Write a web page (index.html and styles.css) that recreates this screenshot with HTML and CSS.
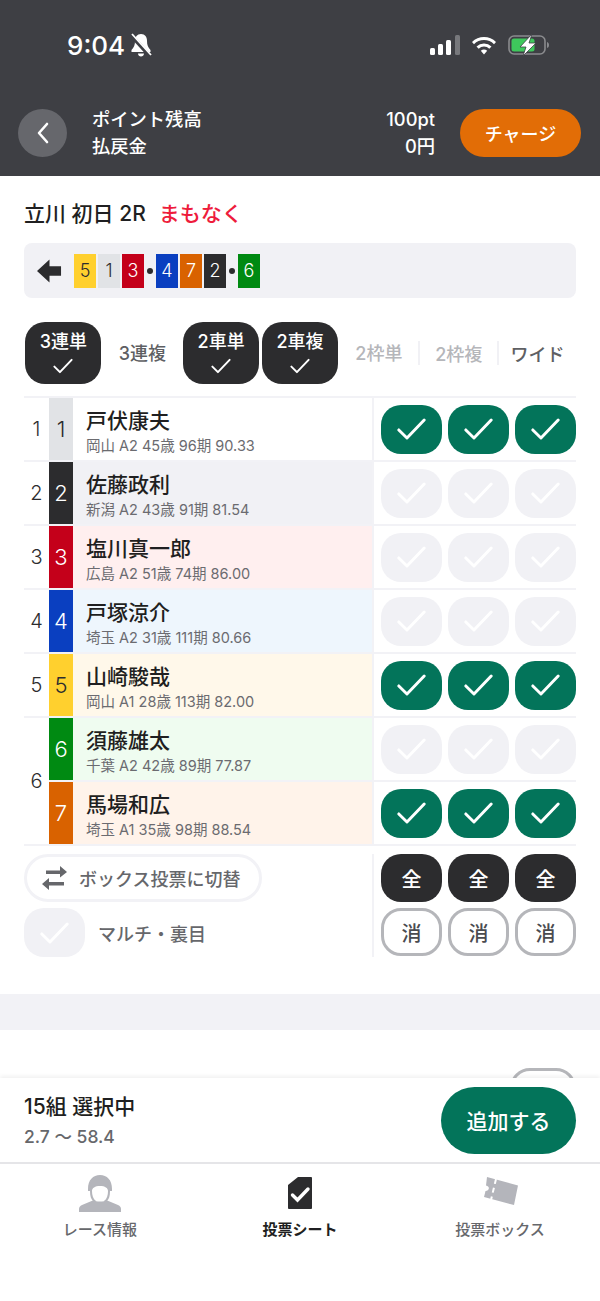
FILE: index.html
```html
<!DOCTYPE html>
<html lang="ja">
<head>
    <meta charset="UTF-8">
    <meta name="viewport" content="width=device-width, initial-scale=1.0">
    <title>投票シート</title>
    <link rel="stylesheet" href="styles.css">
</head>
<body>
<svg class="defs" width="0" height="0">
    <symbol id="check" viewBox="0 0 32 26"><path d="M2 14l9 9L30 3" fill="none" stroke="currentColor" stroke-width="3.2" stroke-linecap="round" stroke-linejoin="round"/></symbol>
</svg>

<div class="app">
    <!-- Header -->
    <header class="top">
        <div class="status">
            <div class="clock">
                <span>9:04</span>
                <svg class="bell" viewBox="0 0 22 24"><path d="M11 1c-4 0-6 3-6 7 0 4-1 6-3.500 9v2h19v-2c-2.500-3-3.500-5-3.500-9 0-4-2-7-6-7zM8 20.500h6c0 2-1.500 3-3 3s-3-1-3-3z" fill="#fff"/><path d="M1 2l19 21" stroke="#3e3f44" stroke-width="4"/><path d="M2 1l19 21" stroke="#fff" stroke-width="1.800"/></svg>
            </div>
            <div class="sys">
                <svg class="signal" viewBox="0 0 30 20"><rect x="0" y="13" width="5" height="7" rx="1.500" fill="#fff"/><rect x="8" y="9" width="5" height="11" rx="1.500" fill="#fff"/><rect x="16" y="5" width="5" height="15" rx="1.500" fill="#fff"/><rect x="25" y="0" width="5" height="20" rx="1.500" fill="#77787c"/></svg>
                <svg class="wifi" viewBox="0 0 26 20"><path d="M1 7a17 17 0 0 1 24 0l-2 2.200a14 14 0 0 0-20 0zM5.500 11.500a11 11 0 0 1 15 0l-2.200 2.300a7.500 7.500 0 0 0-10.600 0zM9.800 15.800a5 5 0 0 1 6.400 0L13 19.500z" fill="#fff"/></svg>
                <svg class="batt" viewBox="0 0 42 22"><rect x="1" y="2" width="36" height="18" rx="5" fill="none" stroke="#8a8b8e" stroke-width="1.600"/><rect x="3.500" y="4.500" width="23" height="13" rx="2.500" fill="#3ec85c"/><path d="M39 8c1.500 .5 2 1.500 2 3s-.5 2.500-2 3z" fill="#8a8b8e"/><path d="M24 0L12 13h6l-3 9L28 9h-7z" fill="#fff" stroke="#3e3f44" stroke-width=".8"/></svg>
            </div>
        </div>
        <div class="bar">
            <button class="back"><svg viewBox="0 0 14 24"><path d="M11 3L3 12l8 9" fill="none" stroke="#fff" stroke-width="2.600" stroke-linecap="round" stroke-linejoin="round"/></svg></button>
            <div class="labels">
                <div>ポイント残高</div>
                <div>払戻金</div>
            </div>
            <div class="values">
                <div>100pt</div>
                <div>0円</div>
            </div>
            <button class="charge">チャージ</button>
        </div>
    </header>

    <main class="content">
        <h1 class="race">立川 初日 2R<span class="soon">まもなく</span></h1>

        <div class="rail">
            <svg class="dir" viewBox="0 0 26 24"><path d="M0 12L13 0v7h12v10H13v7z" fill="#2c2c2e"/></svg>
            <div class="line">
                <span class="chip f5">5</span><span class="chip f1">1</span><span class="chip f3">3</span>
                <span class="sep"></span>
                <span class="chip f4">4</span><span class="chip f7">7</span><span class="chip f2">2</span>
                <span class="sep"></span>
                <span class="chip f6">6</span>
            </div>
        </div>

        <div class="tabs">
            <div class="tab on">3連単<svg><use href="#check"/></svg></div>
            <div class="tab">3連複</div>
            <div class="tab on">2車単<svg><use href="#check"/></svg></div>
            <div class="tab on">2車複<svg><use href="#check"/></svg></div>
            <div class="tab off">2枠単</div>
            <div class="tab off bar-l">2枠複</div>
            <div class="tab bar-l">ワイド</div>
        </div>

        <div class="sheet">
            <div class="num">1</div>
            <div class="frame f1">1</div>
            <div class="info"><div class="name">戸伏康夫</div><div class="sub">岡山 A2 45歳 96期 90.33</div></div>
            <div class="picks"><button class="pick sel"><svg><use href="#check"/></svg></button><button class="pick sel"><svg><use href="#check"/></svg></button><button class="pick sel"><svg><use href="#check"/></svg></button></div>

            <div class="num">2</div>
            <div class="frame f2">2</div>
            <div class="info t2"><div class="name">佐藤政利</div><div class="sub">新潟 A2 43歳 91期 81.54</div></div>
            <div class="picks"><button class="pick"><svg><use href="#check"/></svg></button><button class="pick"><svg><use href="#check"/></svg></button><button class="pick"><svg><use href="#check"/></svg></button></div>

            <div class="num">3</div>
            <div class="frame f3">3</div>
            <div class="info t3"><div class="name">塩川真一郎</div><div class="sub">広島 A2 51歳 74期 86.00</div></div>
            <div class="picks"><button class="pick"><svg><use href="#check"/></svg></button><button class="pick"><svg><use href="#check"/></svg></button><button class="pick"><svg><use href="#check"/></svg></button></div>

            <div class="num">4</div>
            <div class="frame f4">4</div>
            <div class="info t4"><div class="name">戸塚涼介</div><div class="sub">埼玉 A2 31歳 111期 80.66</div></div>
            <div class="picks"><button class="pick"><svg><use href="#check"/></svg></button><button class="pick"><svg><use href="#check"/></svg></button><button class="pick"><svg><use href="#check"/></svg></button></div>

            <div class="num">5</div>
            <div class="frame f5">5</div>
            <div class="info t5"><div class="name">山崎駿哉</div><div class="sub">岡山 A1 28歳 113期 82.00</div></div>
            <div class="picks"><button class="pick sel"><svg><use href="#check"/></svg></button><button class="pick sel"><svg><use href="#check"/></svg></button><button class="pick sel"><svg><use href="#check"/></svg></button></div>

            <div class="num span2">6</div>
            <div class="frame f6">6</div>
            <div class="info t6"><div class="name">須藤雄太</div><div class="sub">千葉 A2 42歳 89期 77.87</div></div>
            <div class="picks"><button class="pick"><svg><use href="#check"/></svg></button><button class="pick"><svg><use href="#check"/></svg></button><button class="pick"><svg><use href="#check"/></svg></button></div>

            <div class="frame f7">7</div>
            <div class="info t7"><div class="name">馬場和広</div><div class="sub">埼玉 A1 35歳 98期 88.54</div></div>
            <div class="picks"><button class="pick sel"><svg><use href="#check"/></svg></button><button class="pick sel"><svg><use href="#check"/></svg></button><button class="pick sel"><svg><use href="#check"/></svg></button></div>
        </div>

        <div class="tools">
            <div class="opts">
                <button class="swap">
                    <svg viewBox="0 0 25 24"><path d="M4 4.500h14V0l7 6-7 5.500V8H4z" fill="#66676b"/><path d="M22 16H7v-4l-7 6 7 6v-4.500h15z" fill="#66676b"/></svg>
                    ボックス投票に切替
                </button>
                <div class="multi">
                    <div class="pick"><svg><use href="#check"/></svg></div>
                    <span>マルチ・裏目</span>
                </div>
            </div>
            <div class="bulk">
                <button class="all">全</button><button class="all">全</button><button class="all">全</button>
                <button class="clear">消</button><button class="clear">消</button><button class="clear">消</button>
            </div>
        </div>

        <div class="band"></div>
        <div class="ghost"></div>
    </main>

    <!-- Footer -->
    <footer class="foot">
        <div class="summary">
            <div class="picked">
                <div class="count">15組 選択中</div>
                <div class="odds">2.7 〜 58.4</div>
            </div>
            <button class="add">追加する</button>
        </div>
        <nav class="nav">
            <div class="item">
                <svg viewBox="0 0 42 38"><path d="M9 15C9 6 14 1 21 1s12 5 12 14v2h-2c0 5-1 8-3 10h-3c3-2 4-6 4-10 0-3-3-5-8-5s-8 2-8 5c0 4 1 8 4 10h-3c-2-2-3-5-3-10H9z" fill="#b4b5bb"/><path d="M0 38v-3c0-2 1-3 3-4l12-5c1 2 11 2 12 0l12 5c2 1 3 2 3 4v3z" fill="#b4b5bb"/></svg>
                <span>レース情報</span>
            </div>
            <div class="item cur">
                <svg viewBox="0 0 42 38"><path d="M19 3h13c.5 0 1 .5 1 1v30c0 .5-.5 1-1 1H10c-.5 0-1-.5-1-1V11z" fill="#2c2c2e"/><path d="M13.500 21l5 5L29 15" fill="none" stroke="#fff" stroke-width="3.400" stroke-linecap="round"/></svg>
                <span>投票シート</span>
            </div>
            <div class="item">
                <svg viewBox="0 0 42 38"><path d="M8 3l31 8.500L35 31 5 23l1.500-6c2 0 3-1 3.300-2.500S9 12 7 11.500z" fill="#b4b5bb"/><path d="M17 5l-5 21" stroke="#fff" stroke-width="2" stroke-dasharray="5 4"/></svg>
                <span>投票ボックス</span>
            </div>
        </nav>
    </footer>
</div>
</body>
</html>
```

FILE: styles.css
```css
* {
    box-sizing: border-box;
}
body {
    margin: 0;
    background: #fff;
    color: #1f1f21;
    font-family: "Inter", "Noto Sans CJK JP", sans-serif;
}
button {
    font-family: inherit;
    border: none;
    padding: 0;
}
.defs {
    position: absolute;
}
.app {
    width: 600px;
    height: 1301px;
    display: flex;
    flex-direction: column;
    overflow: hidden;
}

/* header */
.top {
    height: 176px;
    flex: none;
    background: #3e3f44;
    color: #fff;
}
.status {
    height: 109px;
    padding: 26px 50px 0 67px;
    display: flex;
    justify-content: space-between;
    align-items: flex-start;
}
.clock {
    display: flex;
    align-items: center;
    gap: 5px;
    height: 38px;
    font-size: 26px;
    font-weight: 500;
}
.bell {
    width: 22px;
    height: 24px;
}
.sys {
    display: flex;
    align-items: center;
    gap: 11px;
    height: 38px;
}
.signal {
    width: 30px;
    height: 20px;
}
.wifi {
    width: 26px;
    height: 20px;
}
.batt {
    width: 42px;
    height: 22px;
}
.bar {
    display: flex;
    align-items: center;
    padding: 0 19px 0 18px;
    height: 48px;
}
.back {
    width: 49px;
    height: 48px;
    border-radius: 50%;
    background: #66676c;
    display: flex;
    align-items: center;
    justify-content: center;
}
.back svg {
    width: 14px;
    height: 24px;
}
.labels, .values {
    font-size: 18.3px;
    line-height: 27px;
    font-weight: 500;
}
.labels {
    margin-left: 25px;
    flex: 1;
}
.values {
    text-align: right;
    margin-right: 25px;
}
.charge {
    width: 121px;
    height: 48px;
    border-radius: 24px;
    background: #e26d06;
    color: #fff;
    font-size: 18px;
    font-weight: 500;
}

/* main */
.content {
    flex: 1;
    min-height: 0;
    overflow: hidden;
    padding: 0 24px;
}
.race {
    margin: 24px 0 0;
    height: 27px;
    font-size: 21px;
    line-height: 27px;
    font-weight: 500;
}
.soon {
    margin-left: 13px;
    color: #ee1c3c;
}
.rail {
    margin-top: 16px;
    height: 55px;
    border-radius: 8px;
    background: #f1f1f5;
    display: flex;
    align-items: center;
    padding-left: 13px;
}
.dir {
    width: 25px;
    height: 24px;
}
.line {
    margin-left: 12px;
    display: flex;
    align-items: center;
    gap: 2px;
}
.chip {
    width: 22px;
    height: 34px;
    display: flex;
    align-items: center;
    justify-content: center;
    font-size: 18px;
    font-weight: 300;
}
.sep {
    width: 6px;
    height: 6px;
    margin: 0 1px;
    border-radius: 50%;
    background: #2c2c2e;
}
.f1 { background: #e1e3e6; color: #2c2c2e; }
.f2 { background: #2c2c2e; color: #fff; }
.f3 { background: #c4001a; color: #fff; }
.f4 { background: #0a3fc0; color: #fff; }
.f5 { background: #ffd02e; color: #2c2c2e; }
.f6 { background: #008a12; color: #fff; }
.f7 { background: #d96200; color: #fff; }
.t2 { background: #f1f1f5; }
.t3 { background: #ffefef; }
.t4 { background: #eef6fd; }
.t5 { background: #fff8ea; }
.t6 { background: #effcf0; }
.t7 { background: #fff3ea; }

/* bet types */
.tabs {
    margin-top: 24px;
    height: 62px;
    display: grid;
    grid-template-columns: repeat(7, 1fr);
    align-items: center;
}
.tab {
    height: 62px;
    display: flex;
    flex-direction: column;
    align-items: center;
    justify-content: center;
    padding-bottom: 2px;
    font-size: 18px;
    font-weight: 500;
    color: #5e5f63;
}
.tab.off {
    color: #b5b6ba;
}
.tab.bar-l {
    height: 24px;
    padding-bottom: 0;
    border-left: 2px solid #f1f1f5;
}
.tab.on {
    width: 76px;
    justify-self: center;
    padding-bottom: 3px;
    border-radius: 20px;
    background: #2c2c2e;
    color: #fff;
    line-height: 24px;
}
.tab.on svg {
    width: 20px;
    height: 16px;
    margin-top: 4px;
}

/* racer sheet */
.sheet {
    margin-top: 12px;
    display: grid;
    grid-template-columns: 25px 24px 299px 204px;
    grid-auto-rows: 64px;
    border-bottom: 2px solid #f2f2f6;
}
.num, .frame, .info, .picks {
    border-top: 2px solid #f2f2f6;
}
.num {
    display: flex;
    align-items: center;
    justify-content: center;
    font-size: 20px;
    font-weight: 300;
    color: #2c2c2e;
}
.span2 {
    grid-row: span 2;
}
.frame {
    display: flex;
    align-items: center;
    justify-content: center;
    font-size: 22px;
    font-weight: 300;
    background-clip: padding-box;
}
.info {
    padding: 7px 0 0 13px;
    background-clip: padding-box;
}
.name {
    font-size: 21px;
    line-height: 31px;
    font-weight: 500;
}
.sub {
    font-size: 14.5px;
    line-height: 20px;
    color: #6b6b70;
}
.picks {
    border-left: 2px solid #f2f2f6;
    padding-left: 7px;
    display: flex;
    align-items: center;
    gap: 6px;
}
.pick {
    width: 61px;
    height: 49px;
    flex: none;
    border-radius: 20px;
    background: #f1f1f5;
    color: #fff;
    display: flex;
    align-items: center;
    justify-content: center;
}
.pick.sel {
    background: #03745a;
}
.pick svg {
    width: 29px;
    height: 24px;
}

/* bulk controls */
.tools {
    display: flex;
    justify-content: space-between;
    padding-top: 8px;
}
.opts {
    width: 348px;
}
.swap {
    width: 238px;
    height: 48px;
    border: 3px solid #f2f2f6;
    border-radius: 24px;
    background: #fff;
    color: #66676b;
    font-size: 18px;
    font-weight: 500;
    display: flex;
    align-items: center;
    gap: 12px;
    padding-left: 15px;
}
.swap svg {
    width: 25px;
    height: 24px;
}
.multi {
    margin-top: 6px;
    display: flex;
    align-items: center;
    gap: 13px;
    font-size: 18px;
    font-weight: 500;
    color: #66676b;
}
.bulk {
    width: 204px;
    border-left: 2px solid #f2f2f6;
    padding-left: 7px;
    display: grid;
    grid-template-columns: repeat(3, 61px);
    grid-auto-rows: 48px;
    gap: 6px;
}
.all, .clear {
    font-size: 20px;
    font-weight: 500;
    border-radius: 20px;
}
.all {
    background: #2c2c2e;
    color: #fff;
}
.clear {
    background: #fff;
    border: 3px solid #b5b6ba;
    color: #4a4b4f;
}
.band {
    margin: 37px -24px 0;
    height: 36px;
    background: #f2f2f6;
}
.ghost {
    margin: 38px 0 0 auto;
    width: 66px;
    height: 48px;
    border: 3px solid #b5b6ba;
    border-radius: 20px;
}

/* footer */
.foot {
    flex: none;
    height: 223px;
    background: #fff;
    box-shadow: 0 -2px 4px rgba(0, 0, 0, 0.06);
    position: relative;
}
.summary {
    height: 86px;
    padding: 0 24px;
    border-bottom: 2px solid #e5e5e8;
    display: flex;
    align-items: center;
    justify-content: space-between;
}
.picked {
    padding-top: 3px;
}
.count {
    font-size: 21px;
    line-height: 30px;
    font-weight: 500;
}
.odds {
    font-size: 17.5px;
    line-height: 30px;
    font-weight: 500;
    color: #66676b;
}
.add {
    width: 135px;
    height: 67px;
    border-radius: 34px;
    background: #03745a;
    color: #fff;
    font-size: 21px;
    font-weight: 500;
}
.nav {
    display: grid;
    grid-template-columns: 200px 200px 200px;
    padding-top: 10px;
}
.item {
    display: flex;
    flex-direction: column;
    align-items: center;
    font-size: 15px;
    font-weight: 500;
    color: #66676b;
}
.item svg {
    width: 42px;
    height: 38px;
}
.item span {
    margin-top: 7px;
    line-height: 22px;
}
.item.cur {
    color: #1f1f21;
    font-weight: 700;
}
```
